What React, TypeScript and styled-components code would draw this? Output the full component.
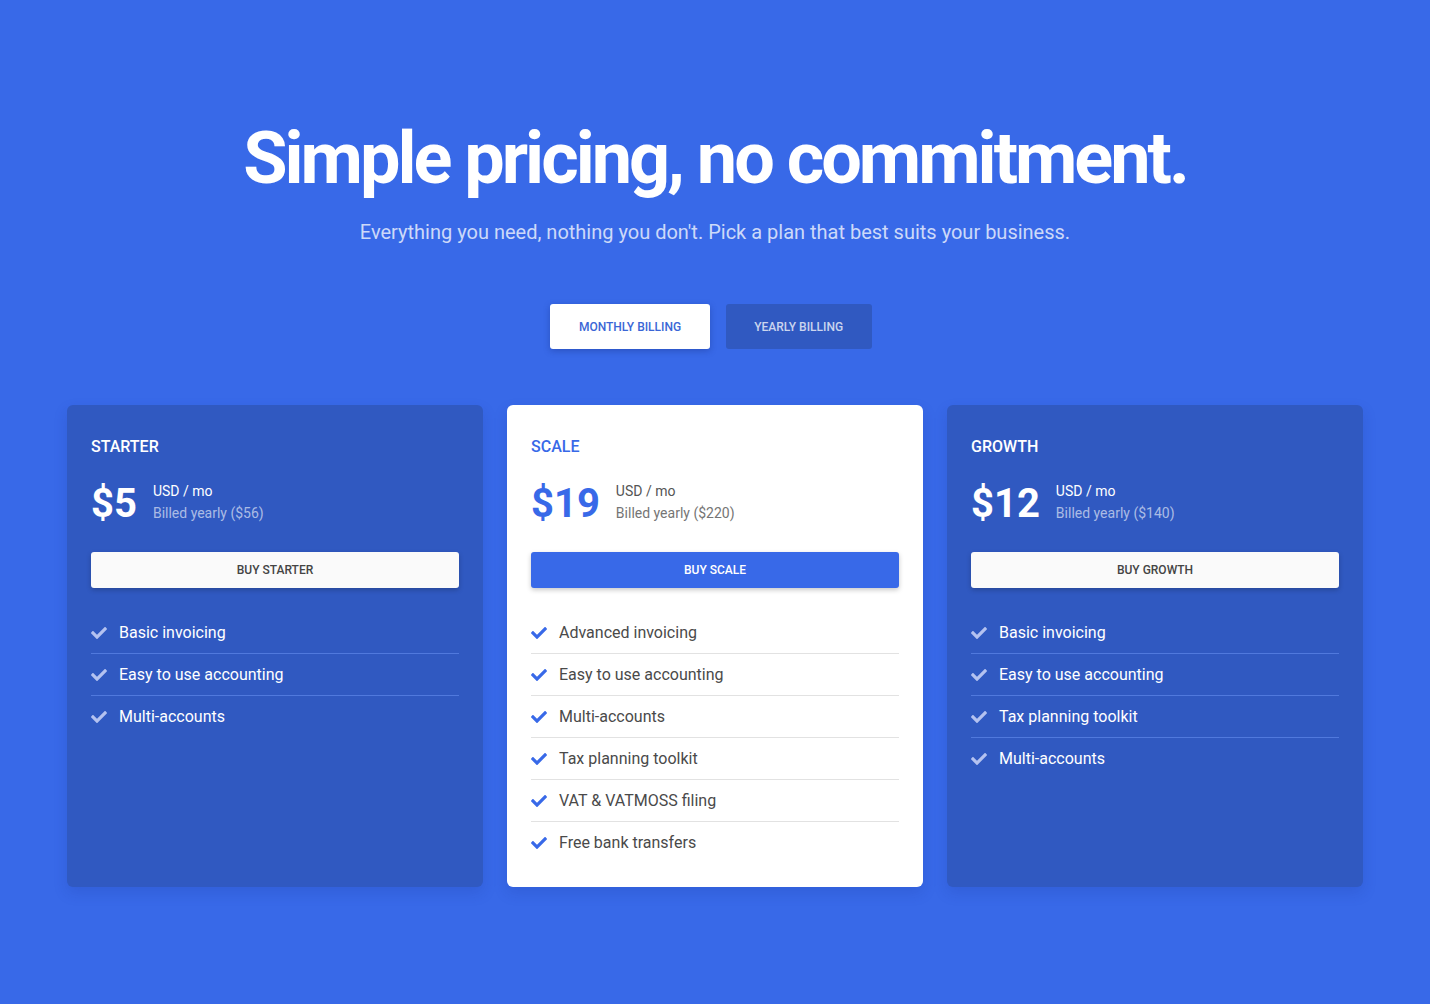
import React from "react";
import styled, { createGlobalStyle } from "styled-components";
import { FaCheck } from "react-icons/fa";

const GlobalStyle = createGlobalStyle`
  html, body {
    margin: 0;
    padding: 0;
    background: #3869e8;
    font-family: Roboto, "Liberation Sans", Arial, sans-serif;
    -webkit-font-smoothing: antialiased;
  }
  * { box-sizing: border-box; }
`;

const Page = styled.main`
  min-height: 1004px;
  background: #3869e8;
  padding: 116px 0 80px;
  display: flex;
  flex-direction: column;
  align-items: center;
`;

const Heading = styled.h1`
  margin: 0;
  font-size: 72px;
  line-height: 86px;
  font-weight: 700;
  letter-spacing: -3px;
  color: #ffffff;
  text-align: center;
`;

const Subtitle = styled.p`
  margin: 16px 0 0;
  font-size: 20px;
  line-height: 28px;
  font-weight: 400;
  color: rgba(255, 255, 255, 0.75);
  text-align: center;
`;

const Toggle = styled.div`
  margin-top: 58px;
  padding-right: 8px;
  display: flex;
  gap: 16px;
`;

const ToggleButton = styled.button<{ $active?: boolean }>`
  height: 45px;
  padding: 0 28.5px;
  border: none;
  border-radius: 3px;
  font-family: inherit;
  font-size: 12px;
  font-weight: 500;
  text-transform: uppercase;
  cursor: pointer;
  background: ${(p) => (p.$active ? "#ffffff" : "#3059c1")};
  color: ${(p) => (p.$active ? "#3a66d6" : "rgba(255,255,255,0.75)")};
  box-shadow: ${(p) => (p.$active ? "0 2px 6px rgba(20,40,120,0.35)" : "none")};
`;

const Cards = styled.section`
  margin-top: 56px;
  width: 1296px;
  display: grid;
  grid-template-columns: repeat(3, 1fr);
  gap: 24px;
`;

const Card = styled.article<{ $featured?: boolean }>`
  border-radius: 6px;
  padding: 30px 24px 24px;
  background: ${(p) => (p.$featured ? "#ffffff" : "#3059c1")};
  box-shadow: 0 6px 14px rgba(20, 50, 150, 0.18);
  display: flex;
  flex-direction: column;
`;

const PlanName = styled.h2<{ $featured?: boolean }>`
  margin: 0;
  font-size: 16px;
  line-height: 24px;
  font-weight: 500;
  text-transform: uppercase;
  color: ${(p) => (p.$featured ? "#3869e8" : "#ffffff")};
`;

const PriceRow = styled.div`
  margin-top: 25px;
  display: flex;
  align-items: flex-start;
  gap: 16px;
`;

const Price = styled.div<{ $featured?: boolean }>`
  font-size: 40px;
  line-height: 40px;
  font-weight: 700;
  color: ${(p) => (p.$featured ? "#3869e8" : "#ffffff")};
`;

const PriceMeta = styled.div`
  display: flex;
  flex-direction: column;
  margin-top: -4px;
`;

const Unit = styled.span<{ $featured?: boolean }>`
  font-size: 14px;
  line-height: 22px;
  font-weight: 400;
  color: ${(p) => (p.$featured ? "#555555" : "#ffffff")};
`;

const Billed = styled.span<{ $featured?: boolean }>`
  font-size: 14px;
  line-height: 22px;
  font-weight: 400;
  color: ${(p) => (p.$featured ? "#757575" : "rgba(255,255,255,0.6)")};
`;

const BuyButton = styled.button<{ $featured?: boolean }>`
  margin-top: 28px;
  height: 36px;
  width: 100%;
  border: none;
  border-radius: 3px;
  font-family: inherit;
  font-size: 12px;
  font-weight: 500;
  text-transform: uppercase;
  cursor: pointer;
  background: ${(p) => (p.$featured ? "#3869e8" : "#fafafa")};
  color: ${(p) => (p.$featured ? "#ffffff" : "#444444")};
  box-shadow: 0 2px 5px rgba(0, 0, 0, 0.22);
`;

const Features = styled.ul`
  list-style: none;
  margin: 24px 0 0;
  padding: 0;
`;

const Feature = styled.li<{ $featured?: boolean }>`
  display: flex;
  align-items: center;
  gap: 12px;
  padding: 10px 0;
  font-size: 16px;
  line-height: 21px;
  font-weight: 400;
  color: ${(p) => (p.$featured ? "#4a4a4a" : "#ffffff")};
  border-bottom: 1px solid
    ${(p) => (p.$featured ? "#e2e2e2" : "rgba(120,160,255,0.45)")};
  &:last-child {
    border-bottom: none;
  }
`;

const CheckIcon = styled(FaCheck)<{ $featured?: boolean }>`
  flex: none;
  width: 16px;
  height: 16px;
  color: ${(p) => (p.$featured ? "#3869e8" : "#b4c2f0")};
`;

type Plan = {
  name: string;
  price: string;
  yearly: string;
  featured?: boolean;
  features: string[];
};

const plans: Plan[] = [
  {
    name: "Starter",
    price: "$5",
    yearly: "$56",
    features: ["Basic invoicing", "Easy to use accounting", "Multi-accounts"],
  },
  {
    name: "Scale",
    price: "$19",
    yearly: "$220",
    featured: true,
    features: [
      "Advanced invoicing",
      "Easy to use accounting",
      "Multi-accounts",
      "Tax planning toolkit",
      "VAT & VATMOSS filing",
      "Free bank transfers",
    ],
  },
  {
    name: "Growth",
    price: "$12",
    yearly: "$140",
    features: [
      "Basic invoicing",
      "Easy to use accounting",
      "Tax planning toolkit",
      "Multi-accounts",
    ],
  },
];

export default function App() {
  return (
    <>
      <GlobalStyle />
      <Page>
        <Heading>Simple pricing, no commitment.</Heading>
        <Subtitle>
          Everything you need, nothing you don't. Pick a plan that best suits your business.
        </Subtitle>
        <Toggle>
          <ToggleButton $active>Monthly billing</ToggleButton>
          <ToggleButton>Yearly billing</ToggleButton>
        </Toggle>
        <Cards>
          {plans.map((plan) => (
            <Card key={plan.name} $featured={plan.featured}>
              <PlanName $featured={plan.featured}>{plan.name}</PlanName>
              <PriceRow>
                <Price $featured={plan.featured}>{plan.price}</Price>
                <PriceMeta>
                  <Unit $featured={plan.featured}>USD / mo</Unit>
                  <Billed $featured={plan.featured}>Billed yearly ({plan.yearly})</Billed>
                </PriceMeta>
              </PriceRow>
              <BuyButton $featured={plan.featured}>Buy {plan.name}</BuyButton>
              <Features>
                {plan.features.map((f) => (
                  <Feature key={f} $featured={plan.featured}>
                    <CheckIcon $featured={plan.featured} />
                    {f}
                  </Feature>
                ))}
              </Features>
            </Card>
          ))}
        </Cards>
      </Page>
    </>
  );
}
